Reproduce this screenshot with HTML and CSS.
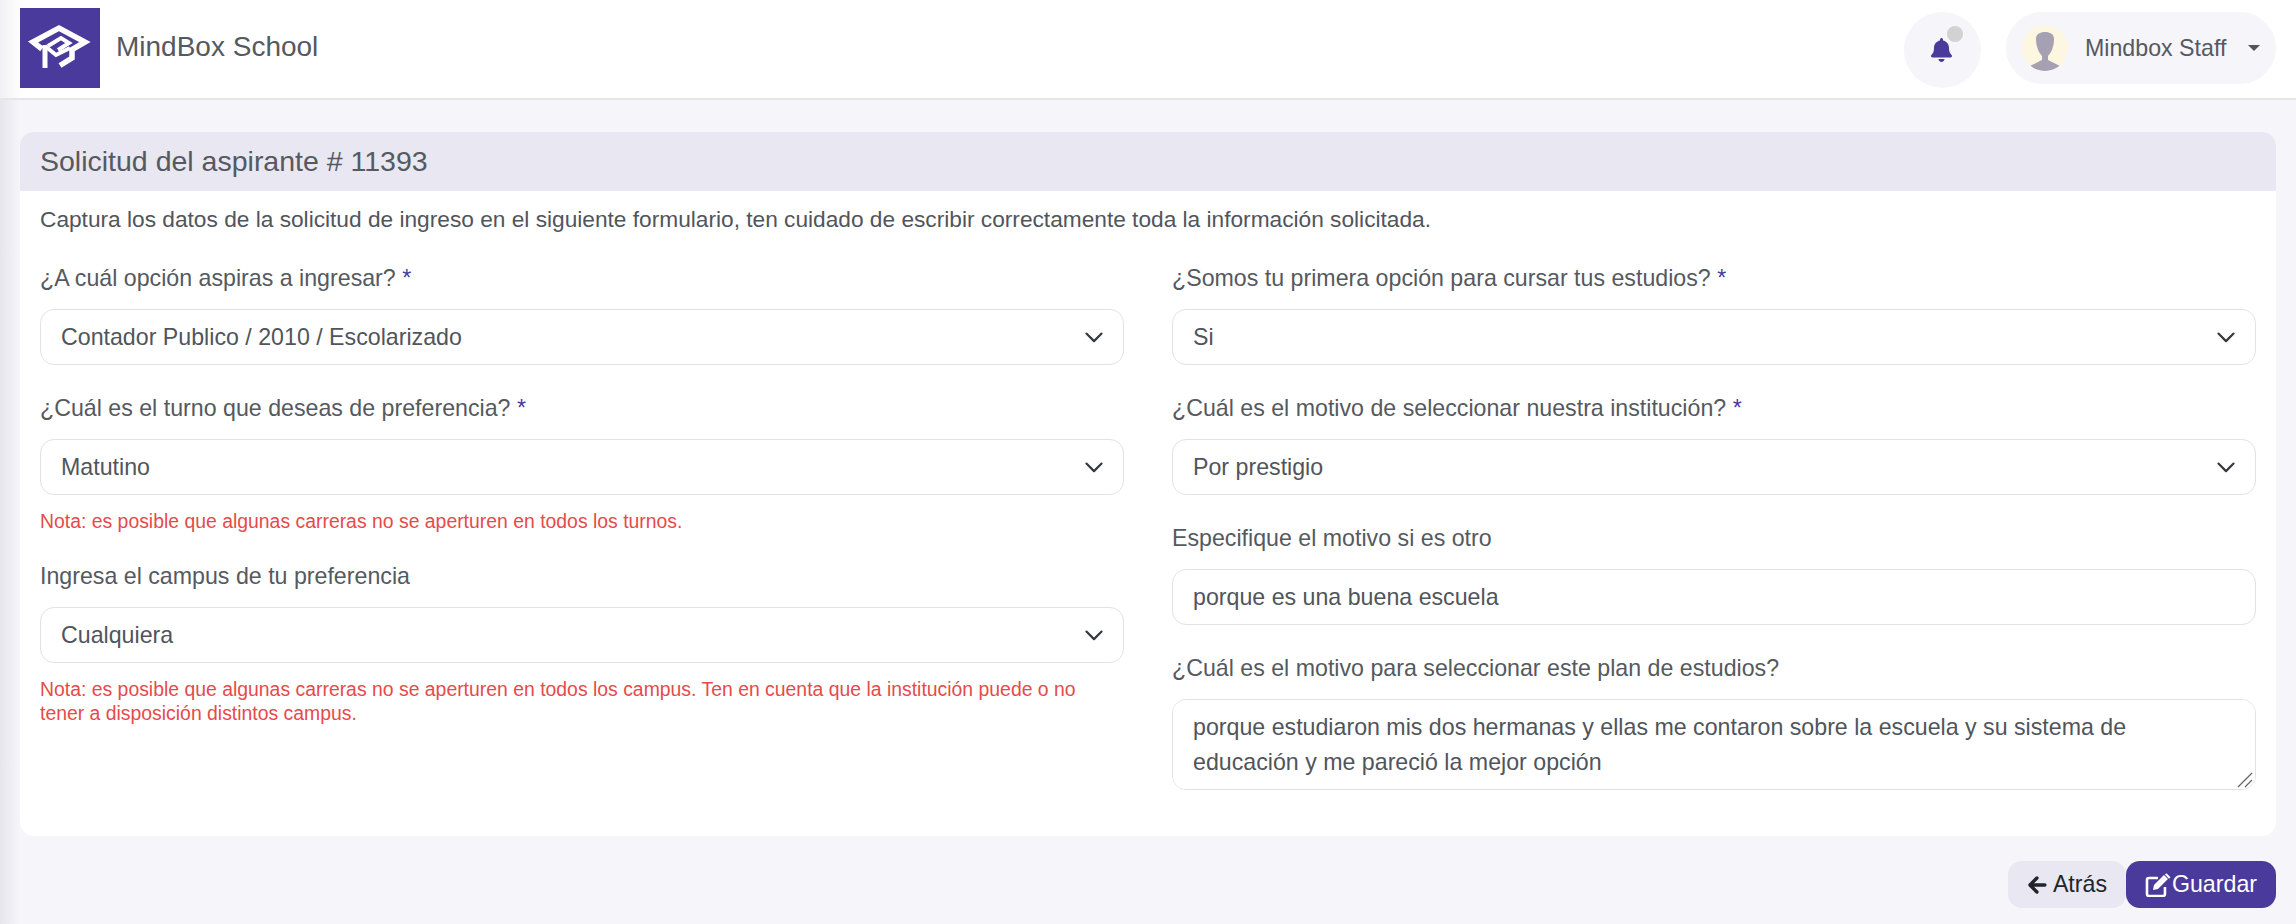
FILE: index.html
```html
<!DOCTYPE html>
<html lang="es">
<head>
<meta charset="utf-8">
<title>MindBox School</title>
<link rel="stylesheet" href="styles.css">
</head>
<body>
<header class="topbar">
  <div class="brand">
    <div class="logo">
      <svg viewBox="0 0 80 80" width="80" height="80" fill="none" stroke="#fff" stroke-width="5.5">
        <path d="M22 41 L13 34 L39 20 L65 34 L52 41.500 L52 50 L40 57.500"/>
        <path d="M25 37 L25 60" stroke-width="5"/>
        <path d="M28 38 L41 30 L49 35 L38 42" stroke-width="4"/>
        <path d="M25 38 L36 47 L50 40" stroke-width="4"/>
      </svg>
    </div>
    <span class="brand-name">MindBox School</span>
  </div>
  <div class="top-actions">
    <div class="bell">
      <svg class="bell-icon" viewBox="0 0 448 512" width="21" height="24" fill="#4a3a9c"><path d="M224 512c35 0 64-29 64-64H160c0 35 29 64 64 64zm215-150c-19-21-55-52-55-154 0-78-54-140-128-155V32a32 32 0 1 0-64 0v21C118 68 64 130 64 208c0 102-36 133-55 154-6 6-9 14-9 22 0 16 13 32 32 32h384c19 0 32-16 32-32 0-8-3-16-9-22z"/></svg>
      <span class="bell-dot"></span>
    </div>
    <div class="user">
      <svg class="avatar" viewBox="0 0 46 46" width="46" height="46">
        <circle cx="23" cy="23" r="23" fill="#fdf6e0"/>
        <path d="M8 41 L20 35 L20 31 C16 27 14 20 14 14 C14 9 18 7 23 7 C28 7 32 9 32 14 C32 20 30 27 26 31 L26 35 L38 41 C34 45 28 46 23 46 C18 46 12 45 8 41 Z" fill="#a5a0b2"/>
      </svg>
      <span class="user-name">Mindbox Staff</span>
      <span class="caret"></span>
    </div>
  </div>
</header>
<main class="page">
  <section class="card">
    <h1 class="card-title">Solicitud del aspirante # 11393</h1>
    <div class="card-body">
      <p class="intro">Captura los datos de la solicitud de ingreso en el siguiente formulario, ten cuidado de escribir correctamente toda la información solicitada.</p>
      <div class="form-grid">
        <div class="col">
          <div class="field">
            <label class="label">¿A cuál opción aspiras a ingresar? <span class="req">*</span></label>
            <div class="select-wrap">
              <select class="control"><option>Contador Publico / 2010 / Escolarizado</option></select>
              <svg class="chev" viewBox="0 0 16 16" width="22" height="22" fill="none" stroke="#343a40" stroke-width="1.6" stroke-linecap="round" stroke-linejoin="round"><path d="M2.5 5.5 8 11l5.5-5.5"/></svg>
            </div>
          </div>
          <div class="field">
            <label class="label">¿Cuál es el turno que deseas de preferencia? <span class="req">*</span></label>
            <div class="select-wrap">
              <select class="control"><option>Matutino</option></select>
              <svg class="chev" viewBox="0 0 16 16" width="22" height="22" fill="none" stroke="#343a40" stroke-width="1.6" stroke-linecap="round" stroke-linejoin="round"><path d="M2.5 5.5 8 11l5.5-5.5"/></svg>
            </div>
            <p class="note">Nota: es posible que algunas carreras no se aperturen en todos los turnos.</p>
          </div>
          <div class="field">
            <label class="label">Ingresa el campus de tu preferencia</label>
            <div class="select-wrap">
              <select class="control"><option>Cualquiera</option></select>
              <svg class="chev" viewBox="0 0 16 16" width="22" height="22" fill="none" stroke="#343a40" stroke-width="1.6" stroke-linecap="round" stroke-linejoin="round"><path d="M2.5 5.5 8 11l5.5-5.5"/></svg>
            </div>
            <p class="note">Nota: es posible que algunas carreras no se aperturen en todos los campus. Ten en cuenta que la institución puede o no tener a disposición distintos campus.</p>
          </div>
        </div>
        <div class="col">
          <div class="field">
            <label class="label">¿Somos tu primera opción para cursar tus estudios? <span class="req">*</span></label>
            <div class="select-wrap">
              <select class="control"><option>Si</option></select>
              <svg class="chev" viewBox="0 0 16 16" width="22" height="22" fill="none" stroke="#343a40" stroke-width="1.6" stroke-linecap="round" stroke-linejoin="round"><path d="M2.5 5.5 8 11l5.5-5.5"/></svg>
            </div>
          </div>
          <div class="field">
            <label class="label">¿Cuál es el motivo de seleccionar nuestra institución? <span class="req">*</span></label>
            <div class="select-wrap">
              <select class="control"><option>Por prestigio</option></select>
              <svg class="chev" viewBox="0 0 16 16" width="22" height="22" fill="none" stroke="#343a40" stroke-width="1.6" stroke-linecap="round" stroke-linejoin="round"><path d="M2.5 5.5 8 11l5.5-5.5"/></svg>
            </div>
          </div>
          <div class="field">
            <label class="label">Especifique el motivo si es otro</label>
            <input class="control" type="text" value="porque es una buena escuela">
          </div>
          <div class="field">
            <label class="label">¿Cuál es el motivo para seleccionar este plan de estudios?</label>
            <div class="select-wrap">
              <textarea class="control area">porque estudiaron mis dos hermanas y ellas me contaron sobre la escuela y su sistema de educación y me pareció la mejor opción</textarea>
              <svg class="grip" viewBox="0 0 16 16" width="16" height="16" stroke="#666" stroke-width="1.300" fill="none"><path d="M1 15 15 1M8 15l7-7"/></svg>
            </div>
          </div>
        </div>
      </div>
    </div>
  </section>
  <div class="actions">
    <button class="btn btn-back" type="button">
      <svg viewBox="0 0 20 20" width="20" height="20" fill="none" stroke="#212529" stroke-width="3.4" stroke-linecap="round" stroke-linejoin="round"><path d="M10 3 3 10l7 7M3.500 10H18"/></svg>
      Atrás
    </button>
    <button class="btn btn-save" type="button">
      <svg viewBox="0 0 27 24" width="27" height="24" fill="none"><path d="M13 5H4a2 2 0 0 0-2 2v14a2 2 0 0 0 2 2h14a2 2 0 0 0 2-2v-7" stroke="#fff" stroke-width="2.6"/><path d="M8 17l1-5L19 2l4 4-10 10zM20 1.500l1.500-1.300 4 4-1.500 1.500z" fill="#fff"/></svg>Guardar
    </button>
  </div>
</main>
</body>
</html>
```
FILE: styles.css
```css
* { box-sizing: border-box; }
html, body { margin: 0; padding: 0; }
body {
  width: 2296px;
  height: 924px;
  overflow: hidden;
  font-family: "Liberation Sans", Arial, sans-serif;
  color: #495057;
  background: #f5f5fa;
}
.topbar {
  height: 100px;
  display: flex;
  justify-content: space-between;
  align-items: flex-start;
  padding: 8px 20px 0;
  background: linear-gradient(to right, #f1f1f3, #fff 22px);
  border-bottom: 2px solid #e6e6ea;
}
.brand { display: flex; align-items: center; gap: 16px; }
.logo { width: 80px; height: 80px; background: #4a3a9c; }
.logo svg { display: block; }
.brand-name { font-size: 28px; color: #555960; margin-bottom: 2px; }
.top-actions { display: flex; align-items: flex-start; gap: 25px; padding-top: 4px; }
.bell {
  position: relative;
  width: 77px;
  height: 76px;
  border-radius: 50%;
  background: #f5f5fa;
  display: flex;
  align-items: center;
  justify-content: center;
}
.bell-icon { margin: 0 3px 0 0; }
.bell-dot {
  position: absolute;
  left: 43px;
  top: 14px;
  width: 16px;
  height: 16px;
  border-radius: 50%;
  background: #d2d2d2;
}
.user {
  width: 270px;
  height: 72px;
  border-radius: 36px;
  background: #f5f5fa;
  display: flex;
  align-items: center;
  padding: 0 16px;
}
.avatar { flex: none; border-radius: 50%; }
.user-name { margin-left: 17px; font-size: 23.2px; color: #555960; white-space: nowrap; }
.caret {
  margin-left: 22px;
  width: 0;
  height: 0;
  border-left: 6px solid transparent;
  border-right: 6px solid transparent;
  border-top: 6px solid #50545c;
}
.page {
  height: 824px;
  padding: 32px 20px 0;
  background: linear-gradient(to right, #e6e6ec, #f5f5fa 20px);
}
.card {
  height: 704px;
  background: #fff;
  border-radius: 14px;
  overflow: hidden;
}
.card-title {
  margin: 0;
  height: 59px;
  padding: 0 20px;
  display: flex;
  align-items: center;
  font-size: 28.5px;
  font-weight: 400;
  color: #555960;
  background: #e9e7f1;
}
.card-body { padding: 15px 20px 0; }
.intro { margin: 0 0 29px; font-size: 22.7px; line-height: 27px; color: #50555c; }
.form-grid { display: grid; grid-template-columns: 1fr 1fr; gap: 48px; }
.col { display: flex; flex-direction: column; }
.field { margin-bottom: 27px; }
.label { display: block; font-size: 23.2px; line-height: 32px; margin-bottom: 15px; color: #555960; }
.req { color: #4a3a9c; }
.select-wrap { position: relative; }
.control {
  display: block;
  width: 100%;
  height: 56px;
  padding: 0 20px;
  font: 23.2px/1.4 "Liberation Sans", Arial, sans-serif;
  color: #50555c;
  background: #fff;
  border: 1px solid #e2e2e5;
  border-radius: 14px;
  outline: none;
  appearance: none;
}
.area { height: 91px; padding: 10px 20px; line-height: 35px; resize: none; }
.chev { position: absolute; right: 19px; top: 17px; pointer-events: none; }
.grip { position: absolute; right: 3px; bottom: 2px; pointer-events: none; }
.note { margin: 14px 0 0; font-size: 19.4px; line-height: 24px; color: #e74a4a; }
.actions { display: flex; justify-content: flex-end; padding-top: 25px; }
.btn {
  height: 47px;
  border: 0;
  border-radius: 14px;
  font: 23.2px "Liberation Sans", Arial, sans-serif;
  display: flex;
  align-items: center;
  padding: 0 19px;
}
.btn-back { width: 118px; gap: 6px; background: #e9e7f1; color: #212529; }
.btn-save { width: 150px; background: #4a3a9c; color: #fff; gap: 0; }
```
